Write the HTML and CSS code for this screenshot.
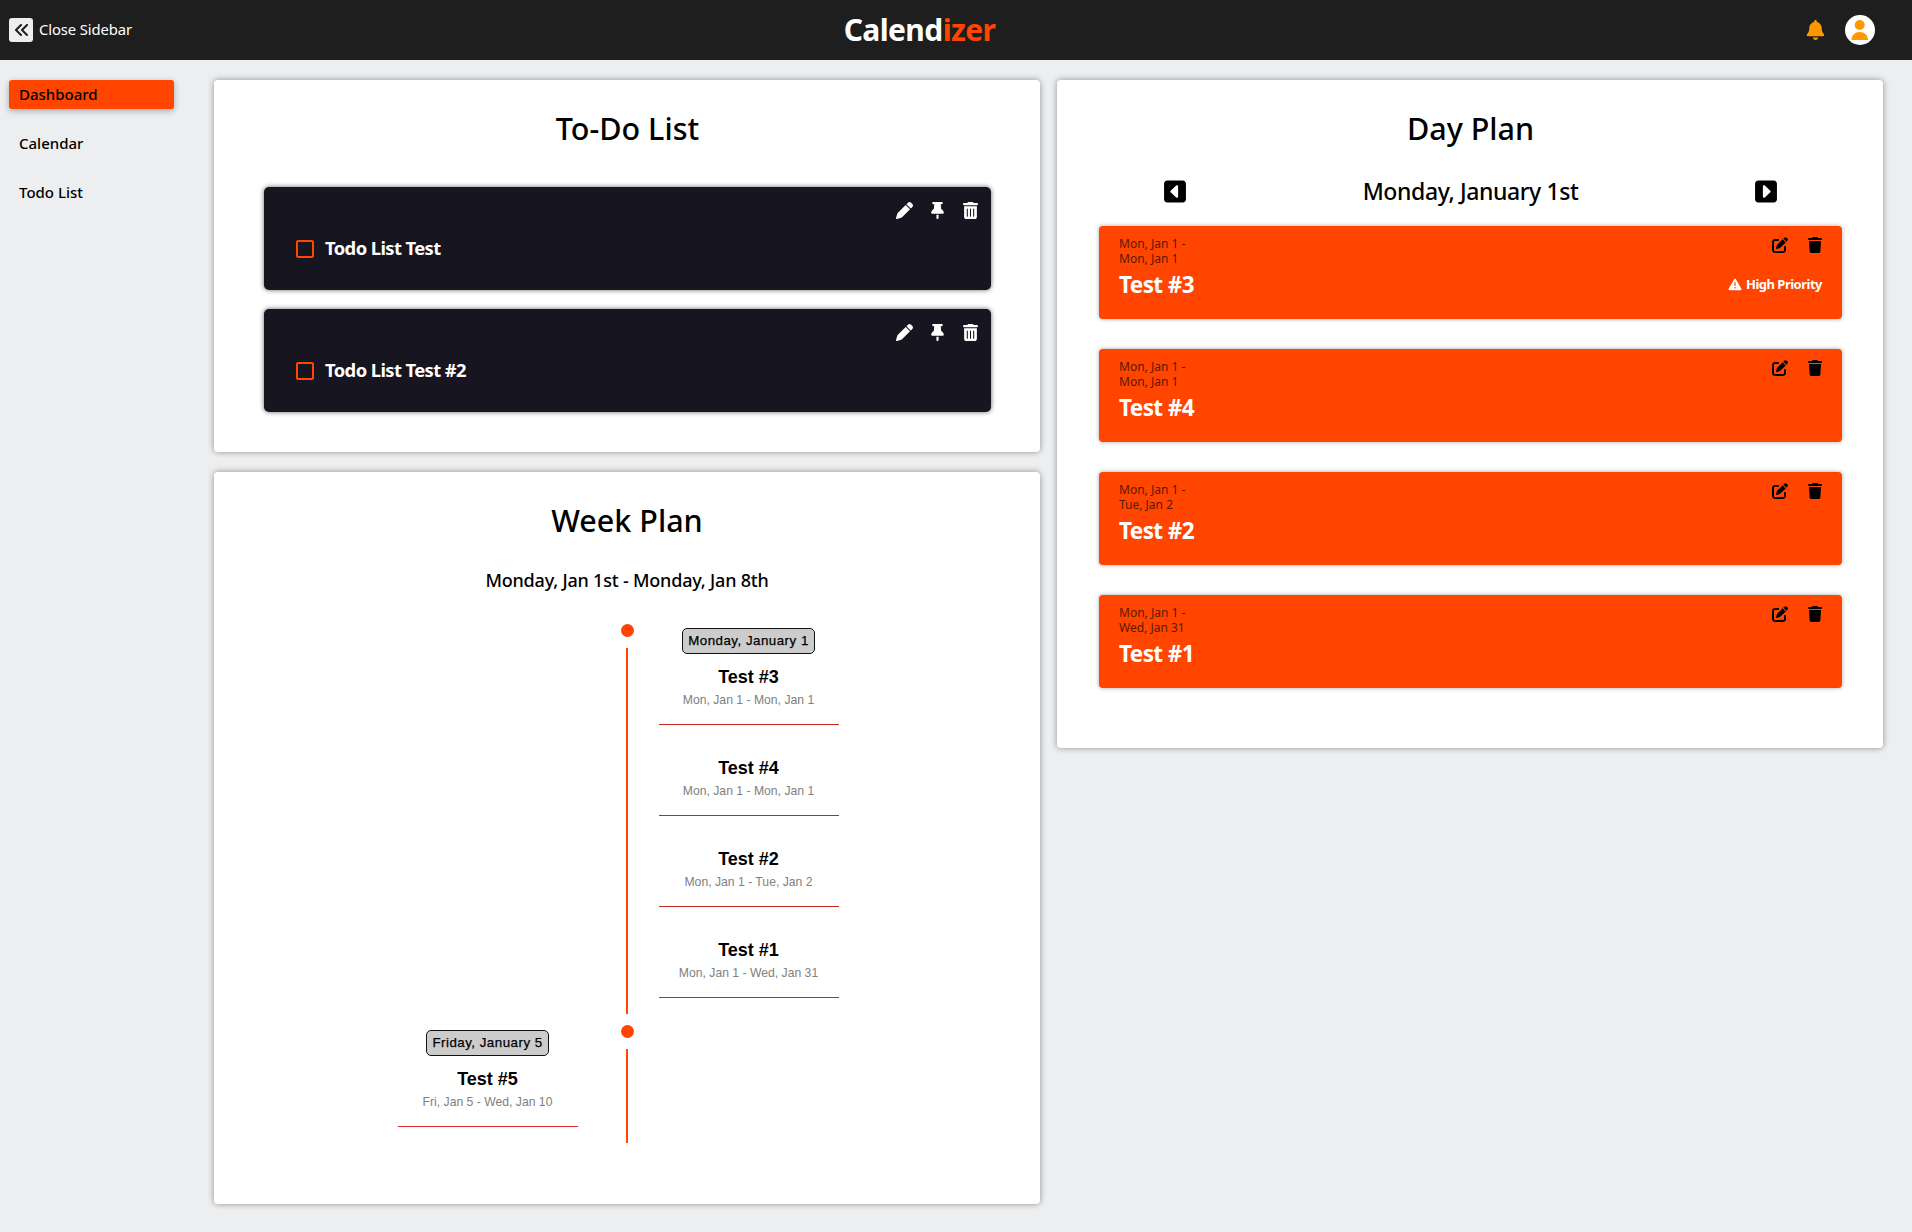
FILE: index.html
```html
<!DOCTYPE html>
<html lang="en">
<head>
    <meta charset="UTF-8">
    <meta name="viewport" content="width=device-width, initial-scale=1.0">
    <title>Calendizer</title>
    <link rel="stylesheet" href="styles.css">
</head>
<body>
    <svg class="icon-defs" xmlns="http://www.w3.org/2000/svg">
        <symbol id="i-angles" viewBox="0 0 448 512"><path d="M41.4 233.4c-12.5 12.5-12.5 32.8 0 45.3l160 160c12.5 12.5 32.8 12.5 45.3 0s12.5-32.8 0-45.3L109.3 256 246.6 118.6c12.5-12.5 12.5-32.8 0-45.3s-32.8-12.5-45.3 0l-160 160zm352-160l-160 160c-12.5 12.5-12.5 32.8 0 45.3l160 160c12.5 12.5 32.8 12.5 45.3 0s12.5-32.8 0-45.3L301.3 256 438.6 118.6c12.5-12.5 12.5-32.8 0-45.3s-32.8-12.5-45.3 0z"/></symbol>
        <symbol id="i-bell" viewBox="0 0 448 512"><path d="M224 0c-17.7 0-32 14.3-32 32V51.2C119 66 64 130.6 64 208v18.8c0 47-17.3 92.4-48.5 127.6l-7.4 8.3c-8.4 9.4-10.4 22.9-5.3 34.4S19.4 416 32 416H416c12.6 0 24-7.4 29.2-18.9s3.1-25-5.3-34.4l-7.4-8.3C401.3 319.2 384 273.9 384 226.8V208c0-77.4-55-142-128-156.8V32c0-17.7-14.3-32-32-32zm45.3 493.3c12-12 18.7-28.3 18.7-45.3H224 160c0 17 6.7 33.3 18.7 45.3s28.3 18.7 45.3 18.7s33.3-6.7 45.3-18.7z"/></symbol>
        <symbol id="i-pencil" viewBox="0 0 512 512"><path d="M362.7 19.3L314.3 67.7 444.3 197.7l48.4-48.4c25-25 25-65.5 0-90.5L453.3 19.3c-25-25-65.5-25-90.5 0zm-71 71L58.6 323.5c-10.4 10.4-18 23.3-22.2 37.4L1 481.2C-1.5 489.7 .8 498.8 7 505s15.3 8.5 23.7 6.1l120.3-35.4c14.1-4.2 27-11.8 37.4-22.2L421.7 220.3 291.7 90.3z"/></symbol>
        <symbol id="i-pin" viewBox="0 0 384 512"><path d="M32 32C32 14.3 46.3 0 64 0H320c17.7 0 32 14.3 32 32s-14.3 32-32 32H290.5l11.4 148.2c36.7 19.9 65.7 53.2 79.5 94.7l1 3c3.3 9.8 1.6 20.5-4.4 28.8s-15.7 13.3-26 13.3H32c-10.3 0-19.9-4.9-26-13.3s-7.7-19.1-4.4-28.8l1-3c13.8-41.5 42.8-74.8 79.5-94.7L93.5 64H64C46.3 64 32 49.7 32 32zM160 384h64v96c0 17.7-14.3 32-32 32s-32-14.3-32-32V384z"/></symbol>
        <symbol id="i-trash-lines" viewBox="0 0 448 512"><path d="M135.2 17.7C140.6 6.8 151.7 0 163.8 0H284.2c12.1 0 23.2 6.8 28.6 17.7L320 32h96c17.7 0 32 14.3 32 32s-14.3 32-32 32H32C14.3 96 0 81.7 0 64S14.3 32 32 32h96l7.2-14.3zM32 128H416V448c0 35.3-28.7 64-64 64H96c-35.3 0-64-28.7-64-64V128zm96 64c-8.8 0-16 7.2-16 16V432c0 8.8 7.2 16 16 16s16-7.2 16-16V208c0-8.8-7.2-16-16-16zm96 0c-8.8 0-16 7.2-16 16V432c0 8.8 7.2 16 16 16s16-7.2 16-16V208c0-8.8-7.2-16-16-16zm96 0c-8.8 0-16 7.2-16 16V432c0 8.8 7.2 16 16 16s16-7.2 16-16V208c0-8.8-7.2-16-16-16z"/></symbol>
        <symbol id="i-trash" viewBox="0 0 448 512"><path d="M135.2 17.7L128 32H32C14.3 32 0 46.3 0 64S14.3 96 32 96H416c17.7 0 32-14.3 32-32s-14.3-32-32-32H320l-7.2-14.3C307.4 6.8 296.3 0 284.2 0H163.8c-12.1 0-23.2 6.8-28.6 17.7zM416 128H32L53.2 467c1.6 25.3 22.6 45 47.9 45H346.9c25.3 0 46.3-19.7 47.9-45L416 128z"/></symbol>
        <symbol id="i-edit" viewBox="0 0 512 512"><path d="M471.6 21.7c-21.9-21.9-57.3-21.9-79.2 0L362.3 51.7l97.9 97.9 30.1-30.1c21.9-21.9 21.9-57.3 0-79.2L471.6 21.7zm-299.2 220c-6.1 6.1-10.8 13.6-13.5 21.9l-29.6 88.8c-2.9 8.6-.6 18.1 5.8 24.6s15.9 8.7 24.6 5.8l88.8-29.6c8.2-2.7 15.7-7.4 21.9-13.5L437.7 172.3 339.7 74.3 172.4 241.7zM96 64C43 64 0 107 0 160V416c0 53 43 96 96 96H352c53 0 96-43 96-96V320c0-17.7-14.3-32-32-32s-32 14.3-32 32v96c0 17.7-14.3 32-32 32H96c-17.7 0-32-14.3-32-32V160c0-17.7 14.3-32 32-32h96c17.7 0 32-14.3 32-32s-14.3-32-32-32H96z"/></symbol>
        <symbol id="i-warn" viewBox="0 0 512 512"><path d="M256 32c14.2 0 27.3 7.5 34.5 19.8l216 368c7.3 12.4 7.3 27.7 .2 40.1S486.3 480 472 480H40c-14.3 0-27.6-7.7-34.7-20.1s-7-27.8 .2-40.1l216-368C228.7 39.5 241.8 32 256 32zm0 128c-13.3 0-24 10.7-24 24V296c0 13.3 10.7 24 24 24s24-10.7 24-24V184c0-13.3-10.7-24-24-24zm32 224a32 32 0 1 0 -64 0 32 32 0 1 0 64 0z"/></symbol>
        <symbol id="i-prev" viewBox="0 0 448 512"><path d="M0 96C0 60.7 28.7 32 64 32H384c35.3 0 64 28.7 64 64V416c0 35.3-28.7 64-64 64H64c-35.3 0-64-28.7-64-64V96zM128 256c0 6.7 2.8 13 7.7 17.6l112 104c7 6.5 17.2 8.2 25.9 4.4s14.4-12.5 14.4-22l0-208c0-9.5-5.7-18.2-14.4-22s-18.9-2.1-25.9 4.4l-112 104C130.8 243 128 249.3 128 256z"/></symbol>
        <symbol id="i-next" viewBox="0 0 448 512"><path d="M448 96c0-35.3-28.7-64-64-64H64C28.7 32 0 60.7 0 96V416c0 35.3 28.7 64 64 64H384c35.3 0 64-28.7 64-64V96zM320 256c0 6.7-2.8 13-7.7 17.6l-112 104c-7 6.5-17.2 8.2-25.9 4.4s-14.4-12.5-14.4-22l0-208c0-9.5 5.7-18.2 14.4-22s18.9-2.1 25.9 4.4l112 104c4.9 4.6 7.7 10.9 7.7 17.6z"/></symbol>
    </svg>

    <header class="topbar">
        <div class="topbar-left">
            <span class="sidebar-toggle"><svg class="toggle-icon"><use href="#i-angles"/></svg></span>
            <span class="toggle-label">Close Sidebar</span>
        </div>
        <div class="logo">Calend<span class="logo-accent">izer</span></div>
        <div class="topbar-right">
            <svg class="bell"><use href="#i-bell"/></svg>
            <svg class="avatar" viewBox="0 0 30 30">
                <circle cx="15" cy="15" r="15" fill="#fff"/>
                <circle cx="14.7" cy="10" r="5" fill="#ff9800"/>
                <path d="M6.5 25c0-5 3.5-8 8.2-8s8.3 3 8.3 8z" fill="#ff9800"/>
            </svg>
        </div>
    </header>

    <div class="layout">
        <nav class="sidebar">
            <a class="nav-item active">Dashboard</a>
            <a class="nav-item">Calendar</a>
            <a class="nav-item">Todo List</a>
        </nav>

        <main class="content">
            <div class="column">
                <section class="card todo-card">
                    <h2 class="card-title">To-Do List</h2>
                    <div class="todo-list">
                        <div class="todo">
                            <div class="todo-actions">
                                <svg class="todo-icon"><use href="#i-pencil"/></svg>
                                <svg class="todo-icon"><use href="#i-pin"/></svg>
                                <svg class="todo-icon"><use href="#i-trash-lines"/></svg>
                            </div>
                            <div class="todo-row">
                                <span class="checkbox"></span>
                                <span class="todo-text">Todo List Test</span>
                            </div>
                        </div>
                        <div class="todo">
                            <div class="todo-actions">
                                <svg class="todo-icon"><use href="#i-pencil"/></svg>
                                <svg class="todo-icon"><use href="#i-pin"/></svg>
                                <svg class="todo-icon"><use href="#i-trash-lines"/></svg>
                            </div>
                            <div class="todo-row">
                                <span class="checkbox"></span>
                                <span class="todo-text">Todo List Test #2</span>
                            </div>
                        </div>
                    </div>
                </section>

                <section class="card week-card">
                    <h2 class="card-title">Week Plan</h2>
                    <div class="week-range">Monday, Jan 1st - Monday, Jan 8th</div>

                    <div class="timeline">
                        <div class="tl-group">
                            <div class="tl-side"></div>
                            <div class="tl-axis"><span class="tl-dot"></span><span class="tl-line"></span></div>
                            <div class="tl-side tl-right">
                                <span class="tl-badge">Monday, January 1</span>
                                <div class="tl-event"><h4>Test #3</h4><p>Mon, Jan 1 - Mon, Jan 1</p></div>
                                <div class="tl-event"><h4>Test #4</h4><p>Mon, Jan 1 - Mon, Jan 1</p></div>
                                <div class="tl-event"><h4>Test #2</h4><p>Mon, Jan 1 - Tue, Jan 2</p></div>
                                <div class="tl-event"><h4>Test #1</h4><p>Mon, Jan 1 - Wed, Jan 31</p></div>
                            </div>
                        </div>
                        <div class="tl-group">
                            <div class="tl-side tl-left">
                                <span class="tl-badge">Friday, January 5</span>
                                <div class="tl-event"><h4>Test #5</h4><p>Fri, Jan 5 - Wed, Jan 10</p></div>
                            </div>
                            <div class="tl-axis"><span class="tl-dot"></span><span class="tl-line"></span></div>
                            <div class="tl-side"></div>
                        </div>
                    </div>
                </section>
            </div>

            <div class="column">
                <section class="card day-card">
                    <h2 class="card-title">Day Plan</h2>
                    <div class="day-nav">
                        <svg class="day-arrow"><use href="#i-prev"/></svg>
                        <span class="day-date">Monday, January 1st</span>
                        <svg class="day-arrow"><use href="#i-next"/></svg>
                    </div>
                    <div class="plan-list">
                        <div class="plan">
                            <div class="plan-main">
                                <div class="plan-dates">Mon, Jan 1 -<br>Mon, Jan 1</div>
                                <div class="plan-name">Test #3</div>
                            </div>
                            <div class="plan-side">
                                <div class="plan-actions">
                                    <svg class="plan-icon"><use href="#i-edit"/></svg>
                                    <svg class="plan-icon"><use href="#i-trash"/></svg>
                                </div>
                                <div class="priority"><svg class="warn"><use href="#i-warn"/></svg>High Priority</div>
                            </div>
                        </div>
                        <div class="plan">
                            <div class="plan-main">
                                <div class="plan-dates">Mon, Jan 1 -<br>Mon, Jan 1</div>
                                <div class="plan-name">Test #4</div>
                            </div>
                            <div class="plan-side">
                                <div class="plan-actions">
                                    <svg class="plan-icon"><use href="#i-edit"/></svg>
                                    <svg class="plan-icon"><use href="#i-trash"/></svg>
                                </div>
                            </div>
                        </div>
                        <div class="plan">
                            <div class="plan-main">
                                <div class="plan-dates">Mon, Jan 1 -<br>Tue, Jan 2</div>
                                <div class="plan-name">Test #2</div>
                            </div>
                            <div class="plan-side">
                                <div class="plan-actions">
                                    <svg class="plan-icon"><use href="#i-edit"/></svg>
                                    <svg class="plan-icon"><use href="#i-trash"/></svg>
                                </div>
                            </div>
                        </div>
                        <div class="plan">
                            <div class="plan-main">
                                <div class="plan-dates">Mon, Jan 1 -<br>Wed, Jan 31</div>
                                <div class="plan-name">Test #1</div>
                            </div>
                            <div class="plan-side">
                                <div class="plan-actions">
                                    <svg class="plan-icon"><use href="#i-edit"/></svg>
                                    <svg class="plan-icon"><use href="#i-trash"/></svg>
                                </div>
                            </div>
                        </div>
                    </div>
                </section>
            </div>
        </main>
    </div>
</body>
</html>
```

FILE: styles.css
```css
* {
    box-sizing: border-box;
}

body {
    margin: 0;
    min-height: 1232px;
    background-color: #edeef0;
    font-family: "Noto Sans", "Open Sans", sans-serif;
    color: #000;
}

h2, h4, p {
    margin: 0;
}

.icon-defs {
    display: none;
}

/* top bar */
.topbar {
    height: 60px;
    background-color: #1e1e1e;
    display: grid;
    grid-template-columns: 1fr auto 1fr;
    align-items: center;
    padding: 0 37px 0 9px;
    color: #fff;
}

.topbar-left {
    display: flex;
    align-items: center;
    gap: 6px;
}

.sidebar-toggle {
    width: 24px;
    height: 24px;
    background-color: #edeef0;
    border-radius: 3px;
    display: flex;
    align-items: center;
    justify-content: center;
}

.toggle-icon {
    width: 14px;
    height: 16px;
    fill: #1e1e1e;
}

.toggle-label {
    font-size: 14.8px;
    letter-spacing: -0.1px;
    padding-bottom: 2px;
}

.logo {
    font-size: 30px;
    font-weight: 700;
    line-height: 40px;
    letter-spacing: -0.6px;
    margin-right: 45px;
}

.logo-accent {
    color: #ff4500;
}

.topbar-right {
    display: flex;
    justify-content: flex-end;
    align-items: center;
    gap: 20px;
}

.bell {
    width: 19px;
    height: 20px;
    fill: #ff9800;
}

.avatar {
    width: 30px;
    height: 30px;
}

/* sidebar */
.layout {
    display: flex;
}

.sidebar {
    width: 214px;
    flex-shrink: 0;
    padding: 20px 40px 0 9px;
    display: flex;
    flex-direction: column;
    gap: 20px;
}

.nav-item {
    height: 29px;
    line-height: 29px;
    padding-left: 10px;
    font-size: 15px;
    font-weight: 500;
    border-radius: 3px;
}

.nav-item.active {
    background-color: #ff4500;
    box-shadow: 0 2px 6px rgba(0, 0, 0, 0.3);
}

/* cards */
.content {
    flex: 1;
    display: grid;
    grid-template-columns: 826px 826px;
    column-gap: 17px;
    padding-top: 20px;
    align-items: start;
}

.column {
    display: flex;
    flex-direction: column;
    gap: 20px;
}

.card {
    background-color: #fff;
    border-radius: 4px;
    box-shadow: 0 0 6px rgba(0, 0, 0, 0.4);
}

.card-title {
    font-size: 30.5px;
    font-weight: 500;
    line-height: 42px;
    text-align: center;
}

/* to-do */
.todo-card {
    height: 372px;
    padding: 27px 49px 0 50px;
}

.todo-list {
    margin-top: 38px;
    display: flex;
    flex-direction: column;
    gap: 19px;
}

.todo {
    height: 103px;
    background-color: #17151f;
    border-radius: 5px;
    box-shadow: 0 0 5px rgba(0, 0, 0, 0.6);
    padding: 15px 12px 0 32px;
    color: #fff;
}

.todo-actions {
    display: flex;
    justify-content: flex-end;
    gap: 16px;
    height: 17px;
}

.todo-icon {
    width: 17px;
    height: 17px;
    fill: #fff;
}

.todo-row {
    margin-top: 15px;
    display: flex;
    align-items: center;
    gap: 11px;
}

.checkbox {
    width: 18px;
    height: 18px;
    border: 2px solid #ff4500;
    border-radius: 2px;
}

.todo-text {
    font-size: 18.4px;
    font-weight: 700;
    line-height: 28px;
    letter-spacing: -0.6px;
    padding-bottom: 1px;
}

/* week plan */
.week-card {
    height: 732px;
    padding-top: 27px;
}

.week-range {
    margin-top: 26px;
    text-align: center;
    font-size: 18px;
    font-weight: 500;
    line-height: 26px;
    letter-spacing: -0.2px;
}

.timeline {
    margin-top: 31px;
}

.tl-group {
    display: grid;
    grid-template-columns: 1fr 13px 1fr;
}

.tl-group + .tl-group {
    margin-top: 11px;
}

.tl-axis {
    display: flex;
    flex-direction: column;
    align-items: center;
}

.tl-dot {
    width: 13px;
    height: 13px;
    border-radius: 50%;
    background-color: #ff4500;
}

.tl-line {
    width: 2px;
    flex: 1;
    margin-top: 11px;
    background-color: #ff4500;
}

.tl-side {
    display: flex;
    flex-direction: column;
    align-items: center;
    font-family: "Liberation Sans", Arial, sans-serif;
}

.tl-right,
.tl-left {
    width: 180px;
    padding-bottom: 16px;
}

.tl-right {
    margin-left: 25px;
}

.tl-left {
    justify-self: end;
    margin-right: 43px;
}

.tl-badge {
    margin-top: 4px;
    height: 26px;
    line-height: 24px;
    padding: 0 5px;
    background-color: #ccc;
    border: 1px solid #111;
    border-radius: 5px;
    font-size: 13.3px;
    letter-spacing: 0.5px;
    -webkit-text-stroke: 0.25px #000;
    color: #000;
}

.tl-left .tl-badge {
    margin-top: 5px;
}

.tl-event {
    width: 100%;
    height: 91px;
    padding-top: 33px;
    text-align: center;
    border-bottom: 1px solid #c0281e;
}

.tl-badge + .tl-event {
    height: 71px;
    padding-top: 13px;
}

.tl-left .tl-event {
    border-bottom-color: #d8262c;
}

.tl-event h4 {
    font-size: 18px;
    font-weight: 700;
    line-height: 20px;
}

.tl-event p {
    margin-top: 3px;
    font-size: 12.2px;
    line-height: 20px;
    color: #808080;
}

/* day plan */
.day-card {
    height: 668px;
    padding: 27px 41px 0 42px;
}

.day-nav {
    margin-top: 26px;
    padding: 0 65px;
    height: 32px;
    display: flex;
    justify-content: space-between;
    align-items: center;
}

.day-arrow {
    width: 22px;
    height: 25px;
    fill: #000;
}

.day-date {
    font-size: 23px;
    font-weight: 500;
    letter-spacing: -0.4px;
}

.plan-list {
    margin-top: 19px;
    display: flex;
    flex-direction: column;
    gap: 30px;
}

.plan {
    height: 93px;
    background-color: #ff4500;
    border-radius: 4px;
    box-shadow: 0 0 4px rgba(0, 0, 0, 0.35);
    padding: 10px 19px 0 20px;
    display: flex;
    justify-content: space-between;
}

.plan-dates {
    font-size: 12px;
    line-height: 15px;
    color: #5a1a04;
}

.plan-name {
    margin-top: 4px;
    font-size: 22.5px;
    font-weight: 700;
    line-height: 30px;
    letter-spacing: -0.6px;
    color: #fff;
}

.plan-side {
    display: flex;
    flex-direction: column;
    align-items: flex-end;
}

.plan-actions {
    display: flex;
    gap: 19px;
    padding-top: 1px;
}

.plan-icon {
    width: 16px;
    height: 16px;
    fill: #000;
}

.priority {
    margin-top: 22px;
    margin-right: 1px;
    display: flex;
    align-items: center;
    gap: 4px;
    font-size: 13px;
    font-weight: 700;
    letter-spacing: -0.5px;
    color: #fff;
}

.warn {
    width: 14px;
    height: 13px;
    fill: #fff;
}
```
